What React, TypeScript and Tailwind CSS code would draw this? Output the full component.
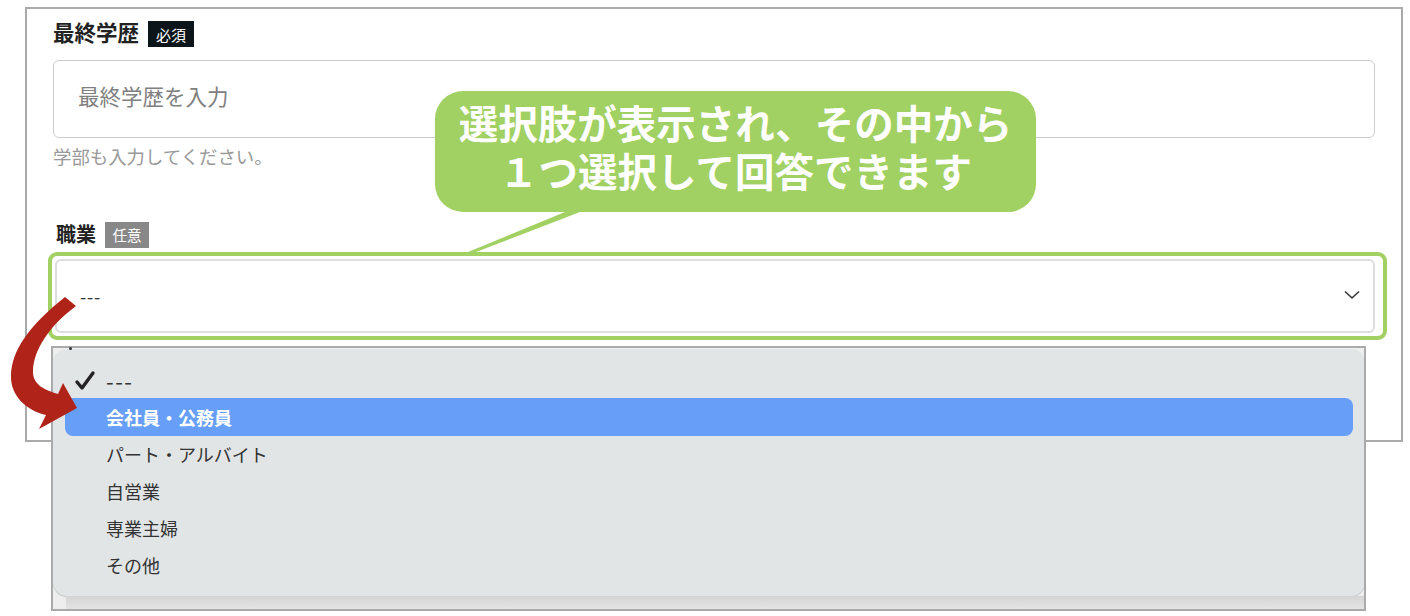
import React from "react";

const font = { fontFamily: '"Noto Sans CJK JP", "Noto Sans", sans-serif' };
const items = ["パート・アルバイト", "自営業", "専業主婦", "その他"];

export default function App() {
  return (
    <div style={font} className="relative w-[1410px] h-[616px] bg-white overflow-hidden pt-[7px] pl-[25px]">
      {/* form frame */}
      <div className="w-[1378px] h-[435px] border-2 border-[#aaaaaa] pl-[26px]">
        <div className="flex items-start gap-[9px] mt-[12px] h-[26px]">
          <span className="text-[21.5px] leading-[21px] font-bold text-[#222]">最終学歴</span>
          <span className="w-[46px] h-[26px] bg-[#0c161a] text-white text-[15px] leading-[27px] text-center">必須</span>
        </div>
        <div className="mt-[13px] w-[1322px] h-[78px] border border-[#cccccc] rounded-[6px] pl-[24px] pb-[6px] flex items-center text-[21.5px] text-[#808080]">
          最終学歴を入力
        </div>
        <div className="mt-[6px] text-[18.4px] leading-[24px] text-[#999999]">学部も入力してください。</div>
        <div className="flex items-start gap-[9px] mt-[54px] h-[26px] pl-[3px]">
          <span className="text-[20px] leading-[23px] font-bold text-[#222]">職業</span>
          <span className="w-[44px] h-[26px] bg-[#888888] text-white text-[14.5px] leading-[25px] text-center">任意</span>
        </div>
        <div className="-ml-[5px] mt-[4px] w-[1339px] h-[88px] border-4 border-[#a1d063] rounded-[9px] pt-[3px] pb-[3px] pl-[3px] pr-[8px]">
          <div className="h-[74px] border-2 border-[#dddddd] rounded-[6px] flex items-center justify-between pl-[23px] pr-[12px]">
            <span className="text-[18px] tracking-[0.8px] leading-[24px] text-[#333]">---</span>
            <svg width="18" height="10" viewBox="0 0 18 10" fill="none" stroke="#333" strokeWidth="1.6" className="-mt-[3px]">
              <path d="M2 1.5 L9 8 L16 1.5" />
            </svg>
          </div>
        </div>
      </div>

      {/* opened select menu */}
      <div className="absolute left-[51px] top-[346px] w-[1315px] h-[265px] border-2 border-[#aaaaaa] bg-[#eeeeee] overflow-hidden">
        <div className="h-[247px] w-[1312px] mt-[1px] bg-[#e2e5e6] rounded-[14px] shadow-[0_1px_0_#c4c4c4] pt-[13px] px-[12px] text-[18px] text-[#333]">
          <div className="relative h-[36px] pl-[41px] flex items-center">
            <svg width="22" height="22" viewBox="0 0 22 22" fill="none" stroke="#222" strokeWidth="3.4" strokeLinecap="round" strokeLinejoin="round" className="absolute left-[9px] top-[8px]">
              <path d="M3 12 L8 18 L19 3" />
            </svg>
            <span className="text-[22px] tracking-[1.5px]">---</span>
          </div>
          <div className="h-[38px] rounded-[8px] bg-[#669ef8] text-white font-semibold pl-[41px] flex items-center">会社員・公務員</div>
          {items.map((t) => (
            <div key={t} className="h-[37px] pl-[41px] flex items-center">{t}</div>
          ))}
        </div>
        <div className="ml-[13px] h-[15px] bg-gradient-to-b from-[#d4d4d4] to-[#e6e6e6]" />
      </div>
      <div className="absolute left-[69px] top-[347px] w-[3px] h-[3px] rounded-full bg-[#333]" />

      {/* callout */}
      <svg width="130" height="50" viewBox="0 0 130 50" className="absolute left-[460px] top-[205px]">
        <polygon points="8,47 16,47 120,7 105,7" fill="#a1d063" />
      </svg>
      <div className="absolute left-[435px] top-[91px] w-[601px] h-[121px] rounded-[28px] bg-[#a1d063] text-white font-bold text-[39.5px] leading-[48px] text-center pt-[7px] whitespace-nowrap">
        <div>選択肢が表示され、その中から</div>
        <div>１つ選択して回答できます</div>
      </div>

      {/* red arrow */}
      <svg width="90" height="150" viewBox="0 0 90 150" className="absolute left-0 top-[290px]">
        <path
          d="M65 7 C30 35 11 60 11 87 C11 105 25 120 46 125 L39 139 L77 118 L63 93 L58 104 C45 100 33 95 33 82 C33 60 50 35 76 16 Z"
          fill="#b02318"
        />
      </svg>
    </div>
  );
}
